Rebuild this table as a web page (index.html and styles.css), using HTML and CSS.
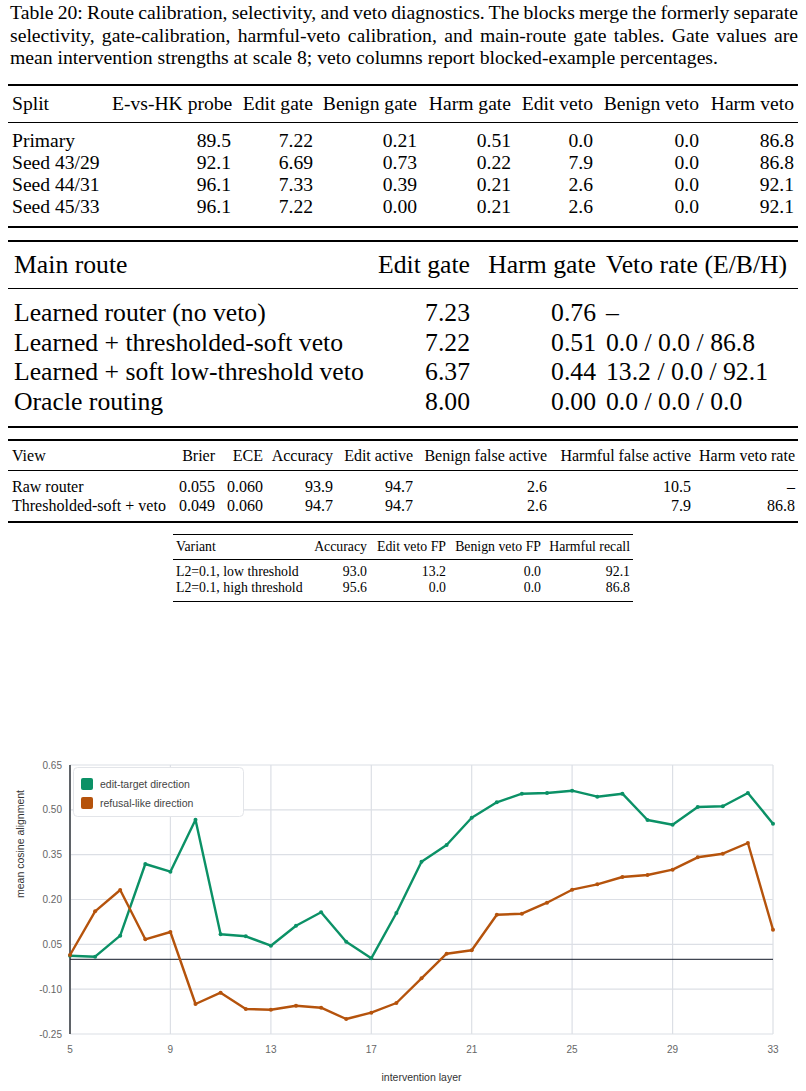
FILE: index.html
```html
<!DOCTYPE html>
<html lang="en">
<head>
<meta charset="utf-8">
<title>Table 20</title>
<link rel="stylesheet" href="styles.css">
</head>
<body>
<p class="caption">Table 20: Route calibration, selectivity, and veto diagnostics. The blocks merge the formerly separate selectivity, gate-calibration, harmful-veto calibration, and main-route gate tables. Gate values are mean intervention strengths at scale 8; veto columns report blocked-example percentages.</p>

<table class="tbl t1">
  <colgroup>
    <col class="w100"><col class="w127"><col class="w82"><col class="w104"><col class="w94"><col class="w82"><col class="w106"><col class="w95">
  </colgroup>
  <thead>
    <tr><th class="l">Split</th><th>E-vs-HK probe</th><th>Edit gate</th><th>Benign gate</th><th>Harm gate</th><th>Edit veto</th><th>Benign veto</th><th>Harm veto</th></tr>
  </thead>
  <tbody>
    <tr><td class="l">Primary</td><td>89.5</td><td>7.22</td><td>0.21</td><td>0.51</td><td>0.0</td><td>0.0</td><td>86.8</td></tr>
    <tr><td class="l">Seed 43/29</td><td>92.1</td><td>6.69</td><td>0.73</td><td>0.22</td><td>7.9</td><td>0.0</td><td>86.8</td></tr>
    <tr><td class="l">Seed 44/31</td><td>96.1</td><td>7.33</td><td>0.39</td><td>0.21</td><td>2.6</td><td>0.0</td><td>92.1</td></tr>
    <tr><td class="l">Seed 45/33</td><td>96.1</td><td>7.22</td><td>0.00</td><td>0.21</td><td>2.6</td><td>0.0</td><td>92.1</td></tr>
  </tbody>
</table>

<table class="tbl t2">
  <colgroup>
    <col class="w364"><col class="w103"><col class="w126"><col class="w197">
  </colgroup>
  <thead>
    <tr><th class="l">Main route</th><th>Edit gate</th><th>Harm gate</th><th class="l">Veto rate (E/B/H)</th></tr>
  </thead>
  <tbody>
    <tr><td class="l">Learned router (no veto)</td><td>7.23</td><td>0.76</td><td class="l">–</td></tr>
    <tr><td class="l">Learned + thresholded-soft veto</td><td>7.22</td><td>0.51</td><td class="l">0.0 / 0.0 / 86.8</td></tr>
    <tr><td class="l">Learned + soft low-threshold veto</td><td>6.37</td><td>0.44</td><td class="l">13.2 / 0.0 / 92.1</td></tr>
    <tr><td class="l">Oracle routing</td><td>8.00</td><td>0.00</td><td class="l">0.0 / 0.0 / 0.0</td></tr>
  </tbody>
</table>

<table class="tbl t3">
  <colgroup>
    <col class="w166"><col class="w44"><col class="w48"><col class="w70"><col class="w80"><col class="w134"><col class="w144"><col class="w104">
  </colgroup>
  <thead>
    <tr><th class="l">View</th><th>Brier</th><th>ECE</th><th>Accuracy</th><th>Edit active</th><th>Benign false active</th><th>Harmful false active</th><th>Harm veto rate</th></tr>
  </thead>
  <tbody>
    <tr><td class="l">Raw router</td><td>0.055</td><td>0.060</td><td>93.9</td><td>94.7</td><td>2.6</td><td>10.5</td><td>–</td></tr>
    <tr><td class="l">Thresholded-soft + veto</td><td>0.049</td><td>0.060</td><td>94.7</td><td>94.7</td><td>2.6</td><td>7.9</td><td>86.8</td></tr>
  </tbody>
</table>

<table class="tbl t4">
  <colgroup>
    <col class="w138"><col class="w59"><col class="w79"><col class="w95"><col class="w89">
  </colgroup>
  <thead>
    <tr><th class="l">Variant</th><th>Accuracy</th><th>Edit veto FP</th><th>Benign veto FP</th><th>Harmful recall</th></tr>
  </thead>
  <tbody>
    <tr><td class="l">L2=0.1, low threshold</td><td>93.0</td><td>13.2</td><td>0.0</td><td>92.1</td></tr>
    <tr><td class="l">L2=0.1, high threshold</td><td>95.6</td><td>0.0</td><td>0.0</td><td>86.8</td></tr>
  </tbody>
</table>

<figure class="chart">
<svg class="chart-svg" width="806" height="341" viewBox="0 750 806 341" xmlns="http://www.w3.org/2000/svg">
  <g class="grid">
    <line x1="70" y1="766" x2="773" y2="766"/>
    <line x1="70" y1="810.8" x2="773" y2="810.8"/>
    <line x1="70" y1="855.7" x2="773" y2="855.7"/>
    <line x1="70" y1="900.5" x2="773" y2="900.5"/>
    <line x1="70" y1="945.3" x2="773" y2="945.3"/>
    <line x1="70" y1="990.2" x2="773" y2="990.2"/>
    <line x1="70" y1="1035" x2="773" y2="1035"/>
    <line x1="170.4" y1="766" x2="170.4" y2="1035"/>
    <line x1="270.9" y1="766" x2="270.9" y2="1035"/>
    <line x1="371.3" y1="766" x2="371.3" y2="1035"/>
    <line x1="471.7" y1="766" x2="471.7" y2="1035"/>
    <line x1="572.1" y1="766" x2="572.1" y2="1035"/>
    <line x1="672.6" y1="766" x2="672.6" y2="1035"/>
    <line x1="773" y1="766" x2="773" y2="1035"/>
  </g>
  <line class="axis" x1="70" y1="766" x2="70" y2="1035"/>
  <line class="zero" x1="70" y1="960.3" x2="773" y2="960.3"/>
  <g class="ylab">
    <text x="62" y="769.5">0.65</text>
    <text x="62" y="814.3">0.50</text>
    <text x="62" y="859.2">0.35</text>
    <text x="62" y="904">0.20</text>
    <text x="62" y="948.8">0.05</text>
    <text x="62" y="993.7">-0.10</text>
    <text x="62" y="1038.5">-0.25</text>
  </g>
  <g class="xlab">
    <text x="70" y="1053.5">5</text>
    <text x="170.4" y="1053.5">9</text>
    <text x="270.9" y="1053.5">13</text>
    <text x="371.3" y="1053.5">17</text>
    <text x="471.7" y="1053.5">21</text>
    <text x="572.1" y="1053.5">25</text>
    <text x="672.6" y="1053.5">29</text>
    <text x="773" y="1053.5">33</text>
  </g>
  <text class="xtitle" x="421.5" y="1082">intervention layer</text>
  <text class="ytitle" transform="translate(24 845) rotate(-90)">mean cosine alignment</text>

  <polyline class="s-green" points="70,956.7 95.1,957.7 120.2,936.7 145.3,865 170.4,872.7 195.5,820.7 220.6,935.3 245.8,937.3 270.9,946.7 296,926.7 321.1,913.3 346.2,942.7 371.3,959.3 396.4,914 421.5,862.7 446.6,846 471.7,818.7 496.8,803.3 521.9,794.7 547,794 572.1,791.7 597.3,797.7 622.4,794.7 647.5,821 672.6,825.7 697.7,808 722.8,807.3 747.9,794 773,824.7"/>
  <polyline class="s-orange" points="70,956 95.1,912.3 120.2,891 145.3,940.3 170.4,933 195.5,1005 220.6,993.7 245.8,1010 270.9,1010.7 296,1006.7 321.1,1008.7 346.2,1020 371.3,1013.7 396.4,1004 421.5,979.3 446.6,954.7 471.7,951.3 496.8,915.7 521.9,914.7 547,903.7 572.1,890.7 597.3,885.3 622.4,878 647.5,876 672.6,870.7 697.7,858.3 722.8,854.7 747.9,844 773,930.7"/>
  <g class="d-green">
    <circle cx="70" cy="956.7" r="2"/><circle cx="95.1" cy="957.7" r="2"/><circle cx="120.2" cy="936.7" r="2"/><circle cx="145.3" cy="865" r="2"/><circle cx="170.4" cy="872.7" r="2"/><circle cx="195.5" cy="820.7" r="2"/><circle cx="220.6" cy="935.3" r="2"/><circle cx="245.8" cy="937.3" r="2"/><circle cx="270.9" cy="946.7" r="2"/><circle cx="296" cy="926.7" r="2"/><circle cx="321.1" cy="913.3" r="2"/><circle cx="346.2" cy="942.7" r="2"/><circle cx="371.3" cy="959.3" r="2"/><circle cx="396.4" cy="914" r="2"/><circle cx="421.5" cy="862.7" r="2"/><circle cx="446.6" cy="846" r="2"/><circle cx="471.7" cy="818.7" r="2"/><circle cx="496.8" cy="803.3" r="2"/><circle cx="521.9" cy="794.7" r="2"/><circle cx="547" cy="794" r="2"/><circle cx="572.1" cy="791.7" r="2"/><circle cx="597.3" cy="797.7" r="2"/><circle cx="622.4" cy="794.7" r="2"/><circle cx="647.5" cy="821" r="2"/><circle cx="672.6" cy="825.7" r="2"/><circle cx="697.7" cy="808" r="2"/><circle cx="722.8" cy="807.3" r="2"/><circle cx="747.9" cy="794" r="2"/><circle cx="773" cy="824.7" r="2"/>
  </g>
  <g class="d-orange">
    <circle cx="70" cy="956" r="2"/><circle cx="95.1" cy="912.3" r="2"/><circle cx="120.2" cy="891" r="2"/><circle cx="145.3" cy="940.3" r="2"/><circle cx="170.4" cy="933" r="2"/><circle cx="195.5" cy="1005" r="2"/><circle cx="220.6" cy="993.7" r="2"/><circle cx="245.8" cy="1010" r="2"/><circle cx="270.9" cy="1010.7" r="2"/><circle cx="296" cy="1006.7" r="2"/><circle cx="321.1" cy="1008.7" r="2"/><circle cx="346.2" cy="1020" r="2"/><circle cx="371.3" cy="1013.7" r="2"/><circle cx="396.4" cy="1004" r="2"/><circle cx="421.5" cy="979.3" r="2"/><circle cx="446.6" cy="954.7" r="2"/><circle cx="471.7" cy="951.3" r="2"/><circle cx="496.8" cy="915.7" r="2"/><circle cx="521.9" cy="914.7" r="2"/><circle cx="547" cy="903.7" r="2"/><circle cx="572.1" cy="890.7" r="2"/><circle cx="597.3" cy="885.3" r="2"/><circle cx="622.4" cy="878" r="2"/><circle cx="647.5" cy="876" r="2"/><circle cx="672.6" cy="870.7" r="2"/><circle cx="697.7" cy="858.3" r="2"/><circle cx="722.8" cy="854.7" r="2"/><circle cx="747.9" cy="844" r="2"/><circle cx="773" cy="930.7" r="2"/>
  </g>

  <g class="legend">
    <rect class="legend-box" x="73.5" y="768.5" width="170" height="49" rx="4"/>
    <rect class="sw-green" x="81" y="779" width="12" height="12" rx="2"/>
    <rect class="sw-orange" x="81" y="798" width="12" height="12" rx="2"/>
    <text x="100" y="788.5">edit-target direction</text>
    <text x="100" y="808">refusal-like direction</text>
  </g>
</svg>
</figure>
</body>
</html>
```

FILE: styles.css
```css
html, body {
  margin: 0;
  padding: 0;
  background: #ffffff;
}

body {
  width: 806px;
  color: #000;
  font-family: "Liberation Serif", "Times New Roman", serif;
}

.caption {
  margin: 0;
  padding: 1px 8px 0 10px;
  font-size: 19.7px;
  line-height: 22.5px;
  text-align: justify;
}

.caption::first-line {
  word-spacing: -1.2px;
}

/* shared table rules (booktabs style) */
.tbl {
  border-collapse: collapse;
  table-layout: fixed;
  width: 790px;
  margin-left: 8px;
  border-top: 2px solid #000;
  border-bottom: 2px solid #000;
}

.tbl th,
.tbl td {
  font-weight: normal;
  text-align: right;
  white-space: nowrap;
  padding: 0 4px;
}

.tbl th {
  border-bottom: 1px solid #000;
}

.tbl .l {
  text-align: left;
}

/* column widths */
.w44 { width: 44px; }
.w48 { width: 48px; }
.w59 { width: 59px; }
.w70 { width: 70px; }
.w79 { width: 79px; }
.w80 { width: 80px; }
.w82 { width: 82px; }
.w89 { width: 89px; }
.w94 { width: 94px; }
.w95 { width: 95px; }
.w100 { width: 100px; }
.w103 { width: 103px; }
.w104 { width: 104px; }
.w106 { width: 106px; }
.w126 { width: 126px; }
.w127 { width: 127px; }
.w134 { width: 134px; }
.w138 { width: 138px; }
.w144 { width: 144px; }
.w166 { width: 166px; }
.w197 { width: 197px; }
.w364 { width: 364px; }

/* table 1 */
.t1 {
  margin-top: 15px;
  font-size: 19.6px;
  line-height: 22px;
}
.t1 th { padding-top: 7px; padding-bottom: 7px; }
.t1 tbody tr:first-child td { padding-top: 7px; }
.t1 tbody tr:last-child td { padding-bottom: 8px; }

/* table 2 */
.t2 {
  margin-top: 12px;
  font-size: 25.7px;
  line-height: 29.5px;
}
.t2 th,
.t2 td { padding-left: 5px; padding-right: 5px; }
.t2 th:first-child,
.t2 td:first-child { padding-left: 6px; }
.t2 th { padding-top: 8px; padding-bottom: 9px; }
.t2 tbody tr:first-child td { padding-top: 9px; }
.t2 tbody tr:last-child td { padding-bottom: 10px; }

/* table 3 */
.t3 {
  margin-top: 11px;
  font-size: 16px;
  line-height: 19px;
}
.t3 th,
.t3 td { padding-left: 3px; padding-right: 3px; }
.t3 th:first-child,
.t3 td:first-child { padding-left: 4px; }
.t3 th { padding-top: 5px; padding-bottom: 5px; }
.t3 tbody tr:first-child td { padding-top: 6px; }
.t3 tbody tr:last-child td { padding-bottom: 6px; }

/* table 4 */
.t4 {
  width: 460px;
  margin: 11px auto 0;
  font-size: 13.8px;
  line-height: 16px;
  border-top-width: 1.5px;
  border-bottom-width: 1.5px;
}
.t4 th,
.t4 td { padding-left: 3px; padding-right: 3px; }
.t4 th { padding-top: 4px; padding-bottom: 4px; }
.t4 tbody tr:first-child td { padding-top: 4px; }
.t4 tbody tr:last-child td { padding-bottom: 5px; }

/* chart */
.chart {
  margin: 147px 0 0;
  padding: 0;
}

.chart-svg {
  display: block;
  font-family: "Liberation Sans", Arial, sans-serif;
}

.grid line {
  stroke: #dcdfe5;
  stroke-width: 1.2;
}

.axis {
  stroke: #5f6368;
  stroke-width: 2;
}

.zero {
  stroke: #111827;
  stroke-width: 1;
}

.ylab text {
  font-size: 10px;
  fill: #666;
  text-anchor: end;
}

.xlab text {
  font-size: 10px;
  fill: #666;
  text-anchor: middle;
}

.xtitle {
  font-size: 10.5px;
  fill: #333;
  text-anchor: middle;
}

.ytitle {
  font-size: 10.5px;
  fill: #333;
  text-anchor: middle;
}

.s-green,
.s-orange {
  fill: none;
  stroke-width: 2.4;
  stroke-linejoin: round;
}

.s-green { stroke: #0b9166; }
.s-orange { stroke: #b5530c; }
.d-green { fill: #0b9166; }
.d-orange { fill: #b5530c; }

.legend-box {
  fill: #ffffff;
  stroke: #e3e5e9;
  stroke-width: 1;
}

.sw-green { fill: #0b9166; }
.sw-orange { fill: #b5530c; }

.legend text {
  font-size: 10.5px;
  fill: #444;
}
```
